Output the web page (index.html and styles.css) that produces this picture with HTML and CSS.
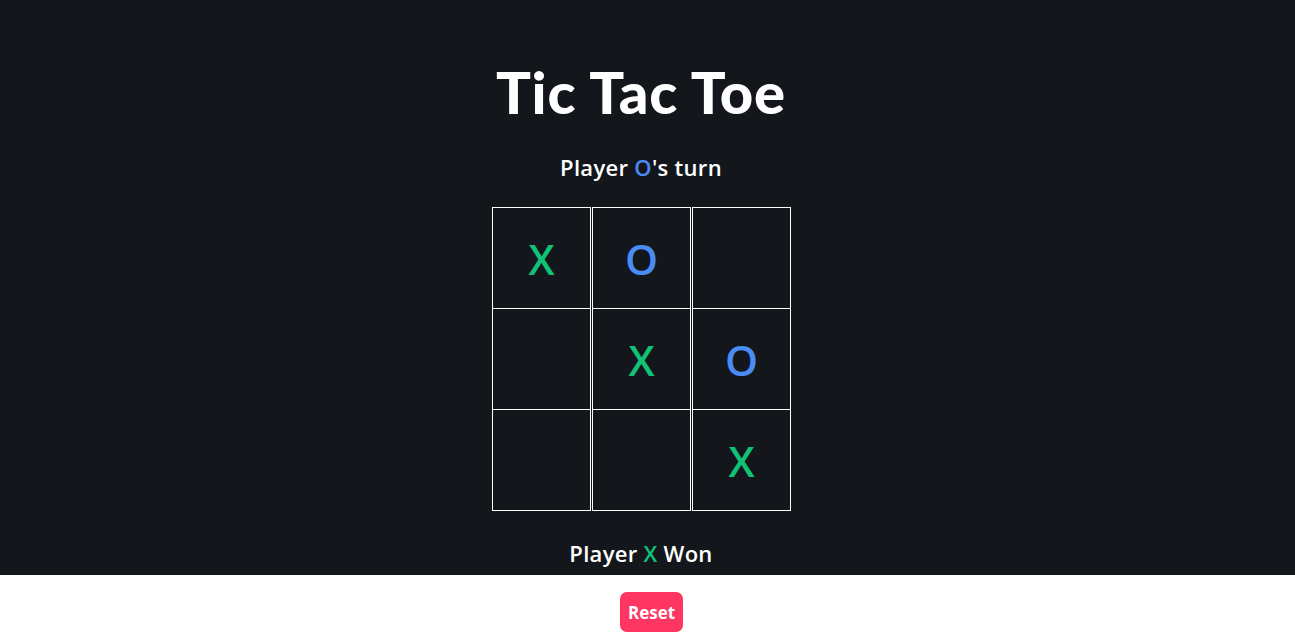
FILE: index.html
```html
<!DOCTYPE html>
<html lang="en">
<head>
<meta charset="utf-8">
<title>Tic Tac Toe</title>
<link rel="stylesheet" href="styles.css">
</head>
<body>
<main class="game">
  <h1 class="title">Tic Tac Toe</h1>
  <p class="status">Player <span class="mark-o">O</span>'s turn</p>
  <div class="board">
    <div class="cell"><span class="mark-x">X</span></div>
    <div class="cell"><span class="mark-o">O</span></div>
    <div class="cell"></div>
    <div class="cell"></div>
    <div class="cell"><span class="mark-x">X</span></div>
    <div class="cell"><span class="mark-o">O</span></div>
    <div class="cell last"></div>
    <div class="cell last"></div>
    <div class="cell last"><span class="mark-x">X</span></div>
  </div>
  <p class="result">Player <span class="mark-x">X</span> Won</p>
</main>
<div class="controls">
  <button class="reset" type="button">Reset</button>
</div>
</body>
</html>
```
FILE: styles.css
```css
html, body {
  margin: 0;
  padding: 0;
  background: #ffffff;
  font-family: "Open Sans", "Lato", sans-serif;
}

.game {
  background: #13171c;
  display: flex;
  flex-direction: column;
  align-items: center;
  padding: 57px 13px 7px 0;
  color: #ffffff;
}

.title {
  margin: 0 0 3px;
  font-family: "Lato", "Open Sans", sans-serif;
  font-size: 58px;
  line-height: 70px;
  font-weight: 900;
  letter-spacing: 0.8px;
}

.status,
.result {
  margin: 0;
  font-size: 22px;
  line-height: 30px;
  font-weight: 600;
  letter-spacing: 0.3px;
}

.status {
  margin-top: 22px;
}

.board {
  margin-top: 25px;
  display: grid;
  grid-template-columns: repeat(3, 99px);
  column-gap: 1px;
  margin-left: 1px;
}

.cell {
  box-sizing: border-box;
  height: 101px;
  border: 1px solid #ffffff;
  border-bottom: none;
  display: flex;
  align-items: center;
  justify-content: center;
  font-family: "Open Sans", sans-serif;
  font-size: 42px;
  font-weight: 600;
}

.cell.last {
  height: 102px;
  border-bottom: 1px solid #ffffff;
}

.mark-x {
  color: #10c176;
}

.mark-o {
  color: #4b8bf5;
}

.result {
  margin-top: 27px;
}

.controls {
  display: flex;
  justify-content: center;
  padding: 17px 0 0 8px;
}

.reset {
  font-family: "Open Sans", "Lato", sans-serif;
  font-size: 17px;
  font-weight: 700;
  color: #ffffff;
  background: #ff3661;
  border: none;
  border-radius: 7px;
  width: 63px;
  height: 40px;
  padding: 0;
}
```
